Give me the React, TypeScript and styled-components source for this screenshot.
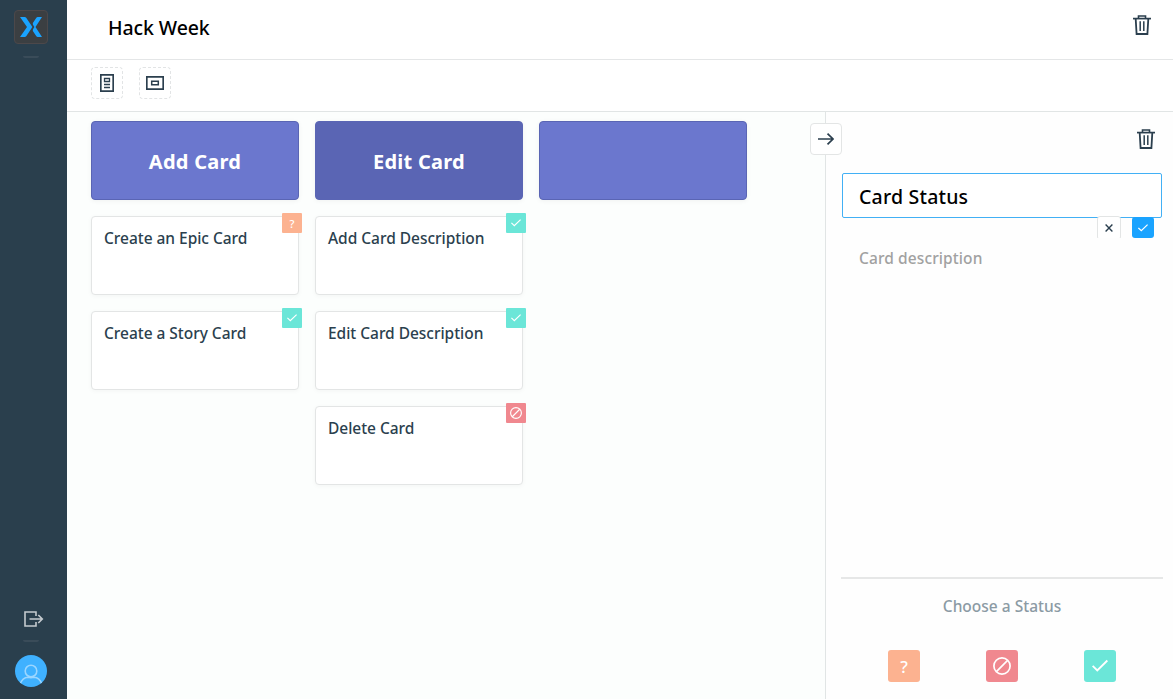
import React from "react";
import styled, { createGlobalStyle } from "styled-components";

const GlobalStyle = createGlobalStyle`
  * {
    box-sizing: border-box;
  }
  body {
    margin: 0;
    font-family: "Noto Sans", "Open Sans", sans-serif;
    color: #2b3f4e;
  }
  svg {
    display: block;
  }
`;

type Status = "question" | "blocked" | "done";

const statusColors: Record<Status, string> = {
  question: "#fcb290",
  blocked: "#f0888f",
  done: "#6be6d8",
};

const Page = styled.div`
  display: flex;
  width: 100%;
  height: 100vh;
  overflow: hidden;
`;

const Sidebar = styled.nav`
  display: flex;
  flex-direction: column;
  flex: none;
  width: 67px;
  padding: 10px 14px 12px;
  background: #2a3f4d;
`;

const Logo = styled.div`
  display: flex;
  align-items: center;
  justify-content: center;
  width: 34px;
  height: 34px;
  border: 1px solid #4c484a;
  border-radius: 4px;
  background: #3b3f42;
`;

const Separator = styled.div<{ $gap: number }>`
  width: 16px;
  height: 2px;
  margin: ${(p) => p.$gap}px 0 0 9px;
  border-radius: 0 0 2px 2px;
  background: #3a4c59;
`;

const Logout = styled.div`
  margin: auto 0 0 10px;
`;

const Avatar = styled.div`
  width: 32px;
  height: 32px;
  margin: 13px 0 0 1px;
  border-radius: 50%;
  background: #3fb1ff;
  overflow: hidden;
`;

const Main = styled.main`
  display: flex;
  flex-direction: column;
  flex: 1;
  min-width: 0;
`;

const Header = styled.header`
  display: flex;
  align-items: flex-start;
  justify-content: space-between;
  height: 60px;
  padding: 15px 22px 0 41px;
  border-bottom: 1px solid #e4e6e7;
  background: #fff;
`;

const Title = styled.h1`
  margin: 0;
  font-size: 19.5px;
  font-weight: 500;
  line-height: 26px;
  letter-spacing: -0.1px;
  color: #000;
`;

const Toolbar = styled.div`
  display: flex;
  gap: 16px;
  height: 52px;
  padding: 7px 24px;
  border-bottom: 1px solid #e1e5e5;
  background: #fff;
`;

const Tool = styled.div`
  display: flex;
  align-items: center;
  justify-content: center;
  width: 32px;
  height: 32px;
  border: 1px dashed #e2e4e5;
  border-radius: 4px;
`;

const Body = styled.div`
  display: flex;
  flex: 1;
  min-height: 0;
`;

const Board = styled.div`
  display: flex;
  align-items: flex-start;
  gap: 16px;
  flex: 1;
  padding: 9px 24px;
  background: #fcfefd;
`;

const Column = styled.div`
  display: flex;
  flex-direction: column;
  gap: 16px;
  width: 208px;
`;

const Epic = styled.div<{ $active?: boolean }>`
  height: 79px;
  padding-top: 26px;
  border: 1px solid #5a65b4;
  border-radius: 4px;
  background: ${(p) => (p.$active ? "#5a65b4" : "#6b77ce")};
  box-shadow: 0 1px 5px rgba(0, 0, 0, 0.05);
  color: #fff;
  font-size: 20px;
  font-weight: 700;
  line-height: 28px;
  letter-spacing: 0.25px;
  text-align: center;
`;

const Story = styled.div`
  position: relative;
  height: 79px;
  padding: 10px 12px;
  border: 1px solid #e3e5e5;
  border-radius: 4px;
  background: #fff;
  box-shadow: 0 1px 5px rgba(0, 0, 0, 0.04);
  font-size: 15.5px;
  font-weight: 500;
  line-height: 22px;
  letter-spacing: -0.03px;
`;

const StatusBox = styled.div<{ $status: Status; $size: number }>`
  display: flex;
  align-items: center;
  justify-content: center;
  width: ${(p) => p.$size}px;
  height: ${(p) => p.$size}px;
  border-radius: ${(p) => (p.$size > 20 ? 3 : 1)}px;
  background: ${(p) => statusColors[p.$status]};
  color: #fff;
  font-size: ${(p) => (p.$size > 20 ? 17 : 11)}px;
  font-weight: 500;
  line-height: 1;
  letter-spacing: 0;
`;

const Badge = styled(StatusBox)`
  position: absolute;
  top: -4px;
  right: -4px;
`;

const Panel = styled.aside`
  position: relative;
  display: flex;
  flex-direction: column;
  flex: none;
  width: 348px;
  padding: 17px 10px 17px 15px;
  border-left: 1px solid #e1e5e5;
  background: #fefefe;
`;

const Collapse = styled.div`
  position: absolute;
  top: 11px;
  left: -16px;
  display: flex;
  align-items: center;
  justify-content: center;
  width: 32px;
  height: 32px;
  border: 1px solid #e3e5e5;
  border-radius: 4px;
  background: #fff;
`;

const PanelTop = styled.div`
  display: flex;
  justify-content: flex-end;
  height: 44px;
  padding-right: 8px;
`;

const Name = styled.div`
  height: 45px;
  margin: 0 1px;
  padding: 9px 16px;
  border: 1px solid #42b0f5;
  border-radius: 2px;
  background: #fff;
  color: #000;
  font-size: 19.5px;
  font-weight: 500;
  line-height: 28px;
  letter-spacing: 0.2px;
`;

const Actions = styled.div`
  display: flex;
  align-items: flex-start;
  justify-content: flex-end;
  gap: 11px;
  height: 22px;
  margin-top: -2px;
  padding-right: 9px;
  overflow: hidden;
`;

const Action = styled.div<{ $primary?: boolean }>`
  position: relative;
  display: flex;
  justify-content: center;
  flex: none;
  width: ${(p) => (p.$primary ? 22 : 24)}px;
  height: ${(p) => (p.$primary ? 21 : 24)}px;
  margin-top: ${(p) => (p.$primary ? 1 : 0)}px;
  padding-top: ${(p) => (p.$primary ? 6 : 7)}px;
  border: ${(p) => (p.$primary ? "0" : "1px solid #e3e5e5")};
  border-radius: 3px;
  background: ${(p) => (p.$primary ? "#1aa3ff" : "#fff")};
`;

const Description = styled.p`
  margin: 9px 18px 0;
  color: #a1a1a1;
  font-size: 15.5px;
  font-weight: 500;
  line-height: 22px;
  letter-spacing: 0.1px;
`;

const Chooser = styled.div`
  margin-top: auto;
  padding-top: 16px;
  border-top: 2px solid #e6e7e7;
  color: #8b9aa4;
  font-size: 15.5px;
  font-weight: 500;
  line-height: 22px;
  text-align: center;
`;

const Choices = styled.div`
  display: flex;
  justify-content: space-between;
  margin: 33px 47px 0;
`;

function TrashIcon() {
  return (
    <svg width="18" height="20" viewBox="0 0 18 20" fill="none" stroke="#2b3f4e">
      <path d="M5.5 3V1h7v2" strokeWidth="1.6" />
      <path d="M0 3.6h18" strokeWidth="1.7" />
      <path d="M2.7 4l.9 15h10.8l.9-15" strokeWidth="1.8" />
      <path d="M7.2 6.3v9.8M10.8 6.3v9.8" strokeWidth="1.5" />
    </svg>
  );
}

function CheckIcon({ size = 10, width = 1.3 }: { size?: number; width?: number }) {
  return (
    <svg width={size} height={size} viewBox="0 0 10 10" fill="none" stroke="#fff">
      <path d="M.4 4.9l2.9 2.8 6.3-6.1" strokeWidth={width} />
    </svg>
  );
}

function BlockedIcon({ size }: { size: number }) {
  return (
    <svg width={size} height={size} viewBox="0 0 18 18" fill="none" stroke="#fff">
      <circle cx="9" cy="9" r="8.1" strokeWidth="1.7" />
      <path d="M3.4 14.6L14.6 3.4" strokeWidth="1.7" />
    </svg>
  );
}

function StatusIcon({ status, large }: { status: Status; large?: boolean }) {
  if (status === "question") return <>?</>;
  if (status === "blocked") return <BlockedIcon size={large ? 18 : 12} />;
  return <CheckIcon size={large ? 16 : 10} width={1.2} />;
}

const columns: {
  title: string;
  active?: boolean;
  stories: { name: string; status: Status }[];
}[] = [
  {
    title: "Add Card",
    stories: [
      { name: "Create an Epic Card", status: "question" },
      { name: "Create a Story Card", status: "done" },
    ],
  },
  {
    title: "Edit Card",
    active: true,
    stories: [
      { name: "Add Card Description", status: "done" },
      { name: "Edit Card Description", status: "done" },
      { name: "Delete Card", status: "blocked" },
    ],
  },
  { title: "", stories: [] },
];

const statuses: Status[] = ["question", "blocked", "done"];

export default function App() {
  return (
    <Page>
      <GlobalStyle />
      <Sidebar>
        <Logo>
          <svg width="22" height="20" viewBox="0 0 22 20" fill="#1aa3ff">
            <path d="M0 0h4.6q1 0 1.6.8L12.4 10l-6.200 9.200q-.6.8-1.600.8H0l7-10z" />
            <path d="M22 0h-4.200q-1 0-1.600.9l-3.200 4.800q-.5 1 0 2L14.400 10 13 12.300q-.5 1 0 2l3.200 4.800q.6.9 1.600.9H22l-6.500-10z" />
          </svg>
        </Logo>
        <Separator $gap={12} />
        <Logout>
          <svg width="20" height="16" viewBox="0 0 20 16" fill="none" stroke="#c5cbcf" strokeWidth="1.6">
            <path d="M12 5V1H1v14h11v-4" />
            <path d="M5.5 8h13M14.3 4l4 4-4 4" />
          </svg>
        </Logout>
        <Separator $gap={13} />
        <Avatar>
          <svg width="32" height="32" viewBox="0 0 32 32" fill="none" stroke="#9bd6ff" strokeWidth="1.6">
            <circle cx="16" cy="16" r="5.8" />
            <path d="M5 29.5c1.500-4.500 4-7.300 8-7.300 2 .6 4 .6 6 0 4 0 6.500 2.800 8 7.300" />
          </svg>
        </Avatar>
      </Sidebar>
      <Main>
        <Header>
          <Title>Hack Week</Title>
          <TrashIcon />
        </Header>
        <Toolbar>
          <Tool>
            <svg width="14" height="18" viewBox="0 0 14 18" fill="none" stroke="#2b3f4e">
              <path d="M.8.8h12.4v16.4H.8z" strokeWidth="1.7" />
              <path d="M4.5 4.5h5v3h-5z" strokeWidth="1.3" />
              <path d="M4 10.5h6M4 13.5h6" strokeWidth="1.3" />
            </svg>
          </Tool>
          <Tool>
            <svg width="18" height="14" viewBox="0 0 18 14" fill="none" stroke="#2b3f4e">
              <path d="M.8.8h16.4v12.4H.8z" strokeWidth="1.7" />
              <path d="M5.7 5.2h6.6v3.6H5.7z" strokeWidth="1.5" />
            </svg>
          </Tool>
        </Toolbar>
        <Body>
          <Board>
            {columns.map((column, i) => (
              <Column key={i}>
                <Epic $active={column.active}>{column.title}</Epic>
                {column.stories.map((story) => (
                  <Story key={story.name}>
                    {story.name}
                    <Badge $status={story.status} $size={20}>
                      <StatusIcon status={story.status} />
                    </Badge>
                  </Story>
                ))}
              </Column>
            ))}
          </Board>
          <Panel>
            <Collapse>
              <svg width="16" height="12" viewBox="0 0 16 12" fill="none" stroke="#2b3f4e" strokeWidth="1.7">
                <path d="M0 6h15M9.5.6L15 6l-5.5 5.4" />
              </svg>
            </Collapse>
            <PanelTop>
              <TrashIcon />
            </PanelTop>
            <Name>Card Status</Name>
            <Actions>
              <Action>
                <svg width="8" height="8" viewBox="0 0 8 8" fill="none" stroke="#2b3f4e" strokeWidth="1.4">
                  <path d="M.6.6l6.8 6.8M7.4.6L.6 7.4" />
                </svg>
              </Action>
              <Action $primary>
                <CheckIcon />
              </Action>
            </Actions>
            <Description>Card description</Description>
            <Chooser>
              Choose a Status
              <Choices>
                {statuses.map((status) => (
                  <StatusBox key={status} $status={status} $size={32}>
                    <StatusIcon status={status} large />
                  </StatusBox>
                ))}
              </Choices>
            </Chooser>
          </Panel>
        </Body>
      </Main>
    </Page>
  );
}
